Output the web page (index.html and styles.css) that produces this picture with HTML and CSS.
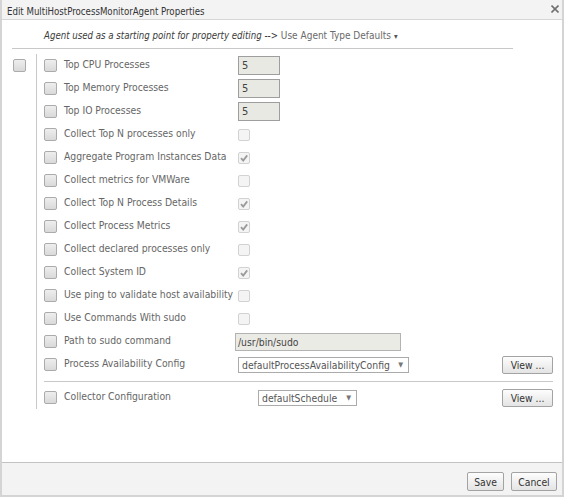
FILE: index.html
```html
<!DOCTYPE html>
<html>
<head>
<meta charset="utf-8">
<link rel="stylesheet" href="styles.css">
</head>
<body>
<div class="dialog">
  <div class="titlebar">
    <span class="title">Edit MultiHostProcessMonitorAgent Properties</span>
    <svg class="close" width="8" height="8" viewBox="0 0 8 8"><path d="M0.5 0.5 L7.5 7.5 M7.5 0.5 L0.5 7.5" stroke="#707070" stroke-width="1.6" fill="none"/></svg>
  </div>
  <div class="content">
    <div class="agent-line"><span class="agent-note">Agent used as a starting point for property editing --&gt;</span> <span class="agent-link">Use Agent Type Defaults</span><span class="caret">▾</span></div>
    <div class="rule-top"></div>
    <div class="form">
      <div class="form-master"><span class="cb"></span></div>
      <div class="form-rows">
        <div class="row"><span class="cb"></span><span class="label">Top CPU Processes</span><span class="value"><span class="num-input">5</span></span></div>
        <div class="row"><span class="cb"></span><span class="label">Top Memory Processes</span><span class="value"><span class="num-input">5</span></span></div>
        <div class="row"><span class="cb"></span><span class="label">Top IO Processes</span><span class="value"><span class="num-input">5</span></span></div>
        <div class="row"><span class="cb"></span><span class="label">Collect Top N processes only</span><span class="value"><span class="vcb"></span></span></div>
        <div class="row"><span class="cb"></span><span class="label">Aggregate Program Instances Data</span><span class="value"><span class="vcb"><svg width="10" height="10" viewBox="0 0 10 10"><path d="M2 5.2 L4.2 7.6 L8.2 2.4" stroke="#9a9a9a" stroke-width="1.8" fill="none"/></svg></span></span></div>
        <div class="row"><span class="cb"></span><span class="label">Collect metrics for VMWare</span><span class="value"><span class="vcb"></span></span></div>
        <div class="row"><span class="cb"></span><span class="label">Collect Top N Process Details</span><span class="value"><span class="vcb"><svg width="10" height="10" viewBox="0 0 10 10"><path d="M2 5.2 L4.2 7.6 L8.2 2.4" stroke="#9a9a9a" stroke-width="1.8" fill="none"/></svg></span></span></div>
        <div class="row"><span class="cb"></span><span class="label">Collect Process Metrics</span><span class="value"><span class="vcb"><svg width="10" height="10" viewBox="0 0 10 10"><path d="M2 5.2 L4.2 7.6 L8.2 2.4" stroke="#9a9a9a" stroke-width="1.8" fill="none"/></svg></span></span></div>
        <div class="row"><span class="cb"></span><span class="label">Collect declared processes only</span><span class="value"><span class="vcb"></span></span></div>
        <div class="row"><span class="cb"></span><span class="label">Collect System ID</span><span class="value"><span class="vcb"><svg width="10" height="10" viewBox="0 0 10 10"><path d="M2 5.2 L4.2 7.6 L8.2 2.4" stroke="#9a9a9a" stroke-width="1.8" fill="none"/></svg></span></span></div>
        <div class="row"><span class="cb"></span><span class="label">Use ping to validate host availability</span><span class="value"><span class="vcb"></span></span></div>
        <div class="row"><span class="cb"></span><span class="label">Use Commands With sudo</span><span class="value"><span class="vcb"></span></span></div>
        <div class="row"><span class="cb"></span><span class="label">Path to sudo command</span><span class="value"><span class="path-input">/usr/bin/sudo</span></span></div>
        <div class="row"><span class="cb"></span><span class="label">Process Availability Config</span><span class="value"><span class="select select-wide"><span class="select-text">defaultProcessAvailabilityConfig</span><span class="select-arrow">▼</span></span><button class="btn btn-view">View ...</button></span></div>
        <div class="sep"></div>
        <div class="row row-collector"><span class="cb"></span><span class="label">Collector Configuration</span><span class="value"><span class="select select-short"><span class="select-text">defaultSchedule</span><span class="select-arrow">▼</span></span><button class="btn btn-view">View ...</button></span></div>
      </div>
    </div>
  </div>
  <div class="footer">
    <button class="btn btn-save">Save</button>
    <button class="btn btn-cancel">Cancel</button>
  </div>
</div>
</body>
</html>
```
FILE: styles.css
```css
html, body {
  margin: 0;
  padding: 0;
  background: #ffffff;
}

.dialog {
  width: 564px;
  height: 497px;
  box-sizing: border-box;
  border-left: 2px solid #d4d4d4;
  border-right: 2px solid #d4d4d4;
  border-bottom: 2px solid #d4d4d4;
  display: flex;
  flex-direction: column;
  font-family: "DejaVu Sans Condensed", "DejaVu Sans", sans-serif;
  font-stretch: condensed;
  font-size: 10.3px;
  color: #666666;
  background: #ffffff;
}

.titlebar {
  height: 19px;
  border-bottom: 1px solid #d6d6d6;
  background: #f3f3f3;
  display: flex;
  align-items: center;
  justify-content: space-between;
  padding: 0 3px 0 5px;
}

.title {
  font-size: 9.6px;
  color: #333333;
  padding-top: 3px;
}

.close {
  display: block;
  margin-bottom: 2px;
}

.content {
  flex: 1;
  display: flex;
  flex-direction: column;
  padding-right: 9px;
}

.agent-line {
  padding: 7px 0 0 42px;
  line-height: 16px;
  height: 16px;
  white-space: nowrap;
}

.agent-note {
  font-style: italic;
  font-size: 9.6px;
  color: #3a3a3a;
}

.agent-link {
  font-size: 10px;
  color: #6a6a6a;
}

.caret {
  font-size: 8px;
  color: #555555;
  margin-left: 3px;
}

.rule-top {
  margin: 5px 0 0 10px;
  width: 501px;
  height: 1px;
  background: #c8c8c8;
}

.form {
  margin-top: 5px;
  display: flex;
}

.form-master {
  width: 34px;
  box-sizing: border-box;
  padding: 5px 0 0 11px;
}

.form-rows {
  flex: 1;
  border-left: 1px solid #c8c8c8;
  padding-left: 7px;
}

.row {
  height: 23px;
  display: flex;
  align-items: center;
}

.cb {
  display: block;
  width: 13px;
  height: 13px;
  box-sizing: border-box;
  border: 1px solid #ababab;
  border-radius: 2px;
  background: linear-gradient(#eeeeee, #d9d9d9);
  flex: none;
}

.label {
  margin: 0 0 4px 7px;
  width: 174px;
  flex: none;
  white-space: nowrap;
}

.value {
  flex: 1;
  display: flex;
  align-items: center;
}

.num-input {
  width: 42px;
  height: 19px;
  box-sizing: border-box;
  border: 1px solid #9e9e9e;
  background: #e9e9e4;
  padding-left: 3px;
  line-height: 17px;
  color: #444444;
  font-size: 11px;
}

.vcb {
  width: 12px;
  height: 12px;
  box-sizing: border-box;
  border: 1px solid #d2d2d2;
  border-radius: 2px;
  background: #f4f4f4;
  display: flex;
  align-items: center;
  justify-content: center;
}

.vcb svg {
  display: block;
}

.path-input {
  margin-left: -3px;
  width: 166px;
  height: 18px;
  box-sizing: border-box;
  border: 1px solid #b3b3b3;
  background: #ebebe6;
  padding-left: 2px;
  line-height: 16px;
  color: #444444;
}

.select {
  height: 16px;
  box-sizing: border-box;
  border: 1px solid #ababab;
  background: #ffffff;
  display: flex;
  align-items: center;
  justify-content: space-between;
  padding: 0 5px 0 3px;
  color: #555555;
}

.select-wide {
  width: 171px;
}

.select-short {
  width: 99px;
  margin-left: 20px;
}

.select-text {
  white-space: nowrap;
}

.select-arrow {
  font-size: 7px;
  color: #777777;
}

.btn {
  font-family: inherit;
  font-stretch: condensed;
  font-size: 10.3px;
  color: #333333;
  box-sizing: border-box;
  border: 1px solid #a3a3a3;
  border-radius: 2px;
  background: linear-gradient(#fdfdfd, #e4e4e4);
  padding: 0;
  margin: 0;
}

.btn-view {
  margin-left: auto;
  width: 51px;
  height: 18px;
}

.sep {
  height: 1px;
  background: #c8c8c8;
  margin: 5px 0 4px 0;
}

.footer {
  height: 33px;
  box-sizing: border-box;
  border-top: 1px solid #c2c2c2;
  background: #f3f3f3;
  display: flex;
  justify-content: flex-end;
  align-items: flex-start;
  gap: 7px;
  padding: 9px 5px 0 0;
}

.btn-save {
  width: 37px;
  height: 19px;
}

.btn-cancel {
  width: 46px;
  height: 19px;
}
```
